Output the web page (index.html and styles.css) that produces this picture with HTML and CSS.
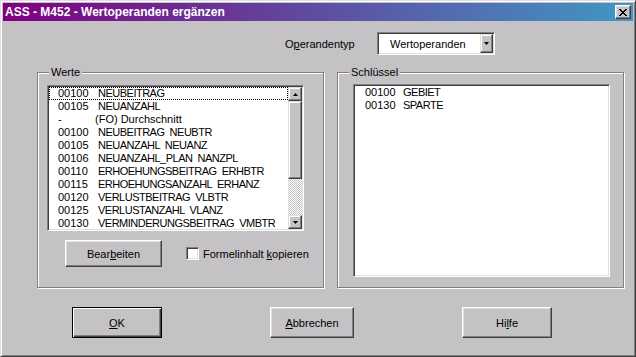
FILE: index.html
```html
<!DOCTYPE html>
<html lang="de">
<head>
<meta charset="UTF-8" />
<title>ASS - M452 - Wertoperanden ergänzen</title>
<link rel="stylesheet" href="styles.css">
</head>
<body>

<div class="window">
  <div class="titlebar">
    <span class="title">ASS - M452 - Wertoperanden ergänzen</span>
    <button class="close-btn" title="Schließen">
      <svg width="8" height="7" viewBox="0 0 8 7" shape-rendering="crispEdges"><path d="M0 0h2v1h1v1h2v-1h1v-1h2v1h-1v1h-1v1h-1v1h1v1h1v1h1v1h-2v-1h-1v-1h-2v1h-1v1h-2v-1h1v-1h1v-1h1v-1h-1v-1h-1v-1h-1z" fill="#000"/></svg>
    </button>
  </div>

  <div class="content">
    <!-- Operandentyp -->
    <div class="type-row">
      <span class="type-label">O<u>p</u>erandentyp</span>
      <div class="combo">
        <span class="combo-value">Wertoperanden</span>
        <span class="combo-btn">
          <svg width="5" height="3" viewBox="0 0 5 3"><path d="M0 0h5L2.5 3z" fill="#000"/></svg>
        </span>
      </div>
    </div>

    <div class="groups">
      <!-- Werte -->
      <div class="group group-werte">
        <span class="group-title">Werte</span>
        <div class="listbox list-werte">
          <ul class="rows">
            <li class="focused"><span class="code">00100</span><span class="name">NEUBEITRAG</span></li>
            <li><span class="code">00105</span><span class="name">NEUANZAHL</span></li>
            <li><span class="code code-dash">-</span>(FO) Durchschnitt</li>
            <li><span class="code">00100</span><span class="name">NEUBEITRAG  NEUBTR</span></li>
            <li><span class="code">00105</span><span class="name">NEUANZAHL  NEUANZ</span></li>
            <li><span class="code">00106</span><span class="name">NEUANZAHL_PLAN  NANZPL</span></li>
            <li><span class="code">00110</span><span class="name">ERHOEHUNGSBEITRAG  ERHBTR</span></li>
            <li><span class="code">00115</span><span class="name">ERHOEHUNGSANZAHL  ERHANZ</span></li>
            <li><span class="code">00120</span><span class="name">VERLUSTBEITRAG  VLBTR</span></li>
            <li><span class="code">00125</span><span class="name">VERLUSTANZAHL  VLANZ</span></li>
            <li><span class="code">00130</span><span class="name">VERMINDERUNGSBEITRAG  VMBTR</span></li>
          </ul>
          <div class="scrollbar">
            <span class="sb-btn">
              <svg width="5" height="3" viewBox="0 0 5 3"><path d="M0 3h5L2.5 0z" fill="#000"/></svg>
            </span>
            <span class="sb-thumb"></span>
            <span class="sb-track"></span>
            <span class="sb-btn">
              <svg width="5" height="3" viewBox="0 0 5 3"><path d="M0 0h5L2.5 3z" fill="#000"/></svg>
            </span>
          </div>
        </div>
        <div class="werte-actions">
          <button class="btn btn-edit">Bear<u>b</u>eiten</button>
          <label class="check"><span class="check-box"></span><span>Formelinhalt <u>k</u>opieren</span></label>
        </div>
      </div>

      <!-- Schlüssel -->
      <div class="group group-keys">
        <span class="group-title">Schlüssel</span>
        <div class="listbox list-keys">
          <ul class="rows">
            <li><span class="code">00100</span><span class="name">GEBIET</span></li>
            <li><span class="code">00130</span><span class="name">SPARTE</span></li>
          </ul>
        </div>
      </div>
    </div>

    <!-- Dialog-Buttons -->
    <div class="footer">
      <button class="btn btn-default btn-ok"><u>O</u>K</button>
      <button class="btn btn-cancel"><u>A</u>bbrechen</button>
      <button class="btn btn-help">Hi<u>l</u>fe</button>
    </div>
  </div>
</div>

</body>
</html>
```

FILE: styles.css
```css
/* --- Allgemein --- */
* {
  box-sizing: border-box;
}
body {
  margin: 0;
  font-family: "Liberation Sans", Arial, sans-serif;
  font-size: 11px;
  color: #000;
  background: #c4c2c4;
}
u {
  text-decoration: underline;
  text-underline-offset: 1px;
}

/* Fensterrahmen */
.window {
  width: 636px;
  height: 357px;
  padding: 2px;
  background: #c4c2c4;
  border: 1px solid;
  border-color: #dfdfdf #404040 #404040 #dfdfdf;
  box-shadow: inset 1px 1px #fff, inset -1px -1px #808080;
}

/* Titelleiste */
.titlebar {
  height: 18px;
  display: flex;
  align-items: center;
  justify-content: space-between;
  padding: 0 2px;
  background: linear-gradient(to right, #800080, #3f98c4);
}
.title {
  color: #fff;
  font-weight: bold;
  font-size: 12px;
}
.close-btn {
  width: 16px;
  height: 14px;
  padding: 0;
  display: flex;
  align-items: center;
  justify-content: center;
  background: #c4c2c4;
  border: 1px solid;
  border-color: #fff #404040 #404040 #fff;
  box-shadow: inset -1px -1px #808080, inset 1px 1px #dfdfdf;
}

/* Operandentyp */
.type-row {
  display: flex;
  align-items: center;
  height: 23px;
  margin-top: 11px;
  padding-left: 282px;
}
.type-label {
  width: 92px;
}
.combo {
  width: 118px;
  height: 23px;
  display: flex;
  align-items: center;
  padding: 1px 1px 1px 12px;
  background: #fff;
  border: 1px solid;
  border-color: #808080 #fff #fff #808080;
  box-shadow: inset 1px 1px #404040, inset -1px -1px #dfdfdf;
}
.combo-btn {
  margin-left: auto;
  width: 13px;
  height: 19px;
  display: flex;
  align-items: center;
  justify-content: center;
  background: #c4c2c4;
  border: 1px solid;
  border-color: #dfdfdf #404040 #404040 #dfdfdf;
  box-shadow: inset -1px -1px #808080, inset 1px 1px #fff;
}

/* Gruppenrahmen */
.groups {
  display: flex;
  gap: 13px;
  margin-top: 17px;
  padding-left: 34px;
}
.group {
  position: relative;
  width: 287px;
  height: 216px;
  border: 1px solid #808080;
  box-shadow: inset 1px 1px #fff, 1px 1px #fff;
}
.group-title {
  position: absolute;
  top: -7px;
  left: 11px;
  padding: 0 2px;
  line-height: 13px;
  background: #c4c2c4;
}
.group-werte {
  padding: 12px 0 0 9px;
}
.group-keys {
  padding: 11px 0 0 15px;
}

/* Listen */
.listbox {
  display: flex;
  width: 257px;
  padding: 1px;
  background: #fff;
  border: 1px solid;
  border-color: #808080 #fff #fff #808080;
  box-shadow: inset 1px 1px #404040, inset -1px -1px #dfdfdf;
}
.list-werte {
  height: 146px;
}
.list-keys {
  height: 193px;
}
.rows {
  flex: 1;
  list-style: none;
  margin: 0;
  padding: 0;
  overflow: hidden;
}
.rows li {
  height: 13px;
  line-height: 13px;
  padding-left: 9px;
  white-space: pre;
}
.rows li.focused {
  outline: 1px dotted #000;
  outline-offset: -1px;
}
.code {
  display: inline-block;
  width: 40px;
}
.code-dash {
  width: 37px;
}
.name {
  letter-spacing: -0.5px;
}
.list-keys .rows li {
  padding-left: 10px;
}
.list-keys .code {
  width: 38px;
}

/* Bildlaufleiste */
.scrollbar {
  width: 14px;
  display: flex;
  flex-direction: column;
}
.sb-btn,
.sb-thumb {
  background: #c4c2c4;
  border: 1px solid;
  border-color: #dfdfdf #404040 #404040 #dfdfdf;
  box-shadow: inset -1px -1px #808080, inset 1px 1px #fff;
}
.sb-btn {
  height: 14px;
  display: flex;
  align-items: center;
  justify-content: center;
}
.sb-thumb {
  height: 78px;
}
.sb-track {
  flex: 1;
  background: repeating-conic-gradient(#c4c2c4 0 25%, #fff 0 50%) 0 0 / 2px 2px;
}

/* Aktionen unter der Werteliste */
.werte-actions {
  display: flex;
  align-items: center;
  margin-top: 9px;
  padding-left: 18px;
}
.check {
  display: flex;
  align-items: center;
  margin-left: 24px;
}
.check-box {
  width: 13px;
  height: 13px;
  margin-right: 4px;
  background: #fff;
  border: 1px solid;
  border-color: #808080 #fff #fff #808080;
  box-shadow: inset 1px 1px #404040, inset -1px -1px #dfdfdf;
}

/* Schaltflächen */
.btn {
  padding: 0;
  font: inherit;
  color: #000;
  background: #c4c2c4;
  border: 1px solid;
  border-color: #fff #404040 #404040 #fff;
  box-shadow: inset -1px -1px #808080, inset 1px 1px #dfdfdf;
}
.btn-default {
  border-color: #000;
  box-shadow: inset 1px 1px #fff, inset -1px -1px #404040, inset -2px -2px #808080;
}
.btn-edit {
  width: 97px;
  height: 27px;
}
.footer {
  display: flex;
  margin-top: 19px;
  padding-left: 69px;
}
.footer .btn {
  height: 31px;
}
.btn-ok {
  width: 90px;
}
.btn-cancel {
  width: 84px;
  margin-left: 108px;
}
.btn-help {
  width: 90px;
  margin-left: 108px;
}
```
